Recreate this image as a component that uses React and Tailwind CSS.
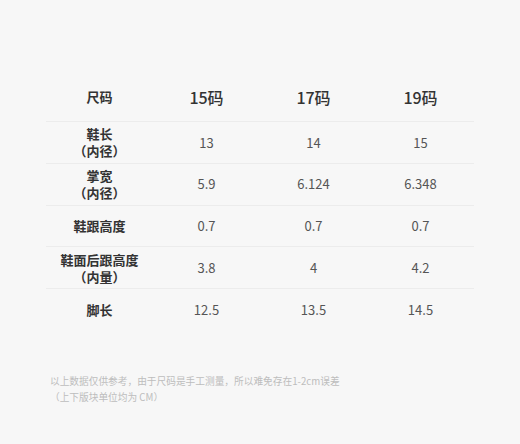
const rows = [
  { label: '鞋长\n（内径）', values: ['13', '14', '15'] },
  { label: '掌宽\n（内径）', values: ['5.9', '6.124', '6.348'] },
  { label: '鞋跟高度', values: ['0.7', '0.7', '0.7'] },
  { label: '鞋面后跟高度\n（内量）', values: ['3.8', '4', '4.2'] },
  { label: '脚长', values: ['12.5', '13.5', '14.5'] },
];

export default function App() {
  return (
    <div
      className="w-[520px] h-[444px] bg-[#f7f7f7] pt-[72px]"
      style={{ fontFamily: '"Noto Sans CJK SC", "Noto Sans", sans-serif' }}
    >
      <div className="mx-[46px]">
        <div className="grid grid-cols-4 h-[50px] items-center text-center border-b border-[#ececec]">
          <div className="text-[13px] font-bold text-[#333]">尺码</div>
          <div className="text-[16px] font-medium text-[#333]">15码</div>
          <div className="text-[16px] font-medium text-[#333]">17码</div>
          <div className="text-[16px] font-medium text-[#333]">19码</div>
        </div>
        {rows.map((row, i) => (
          <div
            key={i}
            className={
              'grid grid-cols-4 h-[41.75px] items-center text-center ' +
              (i < rows.length - 1 ? 'border-b border-[#ececec]' : '')
            }
          >
            <div className="text-[13px] font-bold text-[#333] leading-[17px] whitespace-pre-line">
              {row.label}
            </div>
            {row.values.map((v, j) => (
              <div key={j} className="text-[13px] text-[#555]">
                {v}
              </div>
            ))}
          </div>
        ))}
      </div>
      <div className="mt-[42px] ml-[50px] text-[9.7px] leading-[16px] text-[#bdbdbd] whitespace-pre-line">
        {'以上数据仅供参考，由于尺码是手工测量，所以难免存在1-2cm误差\n（上下版块单位均为 CM）'}
      </div>
    </div>
  );
}
